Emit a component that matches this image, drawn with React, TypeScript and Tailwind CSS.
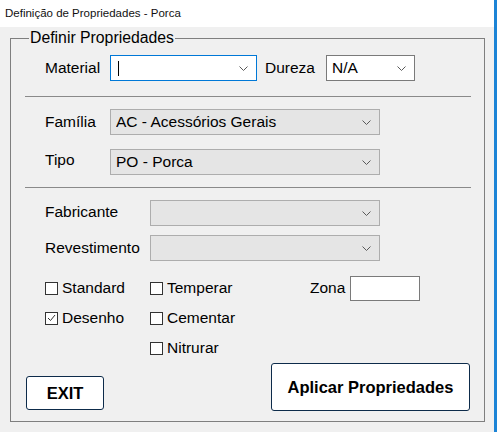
import type { ReactNode } from 'react';

const font = { fontFamily: '"Liberation Sans", Arial, sans-serif' };

function Chevron() {
  return (
    <svg width="9" height="5" viewBox="0 0 9 5" className="shrink-0">
      <polyline points="0.5,0.5 4.5,4.5 8.5,0.5" fill="none" stroke="#5a5a5a" strokeWidth="1" />
    </svg>
  );
}

type ComboTone = 'focus' | 'white' | 'gray';

function Combo({ width, tone, children }: { width: string; tone: ComboTone; children?: ReactNode }) {
  const tones: Record<ComboTone, string> = {
    focus: 'border-[#0078d7] bg-white',
    white: 'border-[#7a7a7a] bg-white',
    gray: 'border-[#adadad] bg-[#e5e5e5]',
  };
  return (
    <div className={`flex h-[26px] items-center border pl-[5px] pr-[8px] ${width} ${tones[tone]}`}>
      <div className="flex-1 truncate leading-none text-black">{children}</div>
      <Chevron />
    </div>
  );
}

function Check({ label, checked = false }: { label: string; checked?: boolean }) {
  return (
    <div className="flex h-[30px] items-center gap-[4px]">
      <span className="flex h-[13px] w-[13px] items-center justify-center border border-[#333] bg-white">
        {checked && (
          <svg width="9" height="8" viewBox="0 0 9 8">
            <polyline points="1,4 3.5,6.5 8,1" fill="none" stroke="#333" strokeWidth="1" />
          </svg>
        )}
      </span>
      <span>{label}</span>
    </div>
  );
}

function Separator() {
  return <div className="ml-[14px] h-px w-[446px] bg-[#8a8a8a]" />;
}

export default function App() {
  return (
    <div
      className="h-[432px] w-[497px] overflow-hidden border-r-[3px] border-[#1c84d6] bg-[#f0f0f0] text-[15.5px] text-black"
      style={font}
    >
      <div className="flex h-[27px] items-center bg-white px-[5px] text-[11.5px] text-[#111]">
        Definição de Propriedades - Porca
      </div>

      <div className="relative ml-[10px] mt-[11px] flex h-[384px] w-[475px] flex-col border border-[#7f7f7f]">
        <span className="absolute left-[18px] top-[-10px] bg-[#f0f0f0] px-[1px] text-[15.8px] leading-[18px]">
          Definir Propriedades
        </span>

        <div className="ml-[34px] mt-[16px] flex items-center">
          <span className="w-[65px]">Material</span>
          <Combo width="w-[147px]" tone="focus">
            <span className="ml-[2px] inline-block h-[15px] w-px bg-black align-middle" />
          </Combo>
          <span className="ml-[8px] w-[61px]">Dureza</span>
          <Combo width="w-[89px]" tone="white">
            N/A
          </Combo>
        </div>

        <div className="mt-[15px]">
          <Separator />
        </div>

        <div className="ml-[34px] mt-[12px] flex items-center">
          <span className="w-[65px]">Família</span>
          <Combo width="w-[270px]" tone="gray">
            AC - Acessórios Gerais
          </Combo>
        </div>
        <div className="ml-[34px] mt-[14px] flex items-center">
          <span className="w-[65px] -translate-y-[2px]">Tipo</span>
          <Combo width="w-[270px]" tone="gray">
            PO - Porca
          </Combo>
        </div>

        <div className="mt-[12px]">
          <Separator />
        </div>

        <div className="ml-[34px] mt-[12px] flex items-center">
          <span className="w-[105px] -translate-y-[1px]">Fabricante</span>
          <Combo width="w-[230px]" tone="gray" />
        </div>
        <div className="ml-[34px] mt-[9px] flex items-center">
          <span className="w-[105px]">Revestimento</span>
          <Combo width="w-[230px]" tone="gray" />
        </div>

        <div className="ml-[34px] mt-[12px] grid grid-cols-[105px_160px_auto]">
          <div className="flex flex-col">
            <Check label="Standard" />
            <Check label="Desenho" checked />
          </div>
          <div className="flex flex-col">
            <Check label="Temperar" />
            <Check label="Cementar" />
            <Check label="Nitrurar" />
          </div>
          <div className="flex h-[30px] items-center gap-[5px]">
            <span>Zona</span>
            <div className="h-[25px] w-[70px] border border-[#7a7a7a] bg-white" />
          </div>
        </div>

        <div className="ml-[15px] mr-[14px] flex items-end justify-between">
          <button
            type="button"
            className="mb-px flex h-[34px] w-[78px] items-center justify-center rounded-[3px] border border-[#0d2b4a] bg-white text-[16.5px] font-bold"
          >
            EXIT
          </button>
          <button
            type="button"
            className="flex h-[48px] w-[199px] items-center justify-center rounded-[3px] border border-[#0d2b4a] bg-white text-[16.5px] font-bold"
          >
            Aplicar Propriedades
          </button>
        </div>
      </div>
    </div>
  );
}
